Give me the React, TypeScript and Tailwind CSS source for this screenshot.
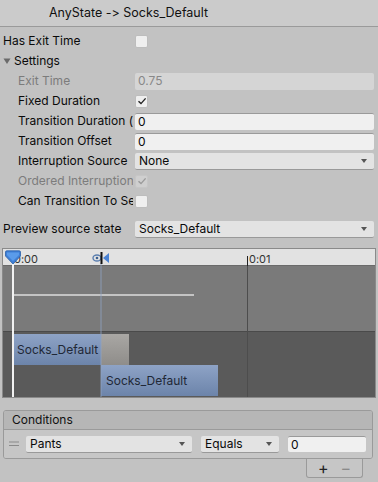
import React from "react";

const font = { fontFamily: "Inter, 'Noto Sans', sans-serif" };

function Arrow() {
  return (
    <svg width="8" height="6" viewBox="0 0 8 6" className="shrink-0">
      <path d="M1 1 L7 1 L4 5 Z" fill="#555" />
    </svg>
  );
}

function Check({ on, disabled }: { on?: boolean; disabled?: boolean }) {
  return (
    <div
      className={`w-[13px] h-[13px] rounded-[2px] flex items-center justify-center ${
        disabled ? "bg-[#cfcfcf] border border-[#c6c6c6]" : "bg-[#efefef] border border-[#bdbdbd]"
      }`}
    >
      {on && (
        <svg width="10" height="10" viewBox="0 0 10 10">
          <path
            d="M1.5 5.2 L4 7.6 L8.6 2.4"
            fill="none"
            stroke={disabled ? "#9a9a9a" : "#222"}
            strokeWidth="1.4"
          />
        </svg>
      )}
    </div>
  );
}

function Row({
  label,
  indent,
  disabled,
  children,
}: {
  label: string;
  indent?: boolean;
  disabled?: boolean;
  children?: React.ReactNode;
}) {
  return (
    <div className="flex items-center h-[20px]">
      <div
        className={`w-[133px] shrink-0 overflow-hidden whitespace-nowrap ${indent ? "pl-[18px]" : "pl-[3px]"} ${
          disabled ? "text-[#7c7c7c]" : "text-[#0a0a0a]"
        }`}
      >
        {label}
      </div>
      <div className="flex-1 flex items-center pl-[2px] pr-[4px]">{children}</div>
    </div>
  );
}

function TextField({ value, disabled }: { value: string; disabled?: boolean }) {
  return (
    <div
      className={`flex-1 h-[17px] rounded-[2px] px-[3px] flex items-center ${
        disabled
          ? "bg-[#d5d5d5] text-[#888]"
          : "bg-[#f0f0f0] border-t border-[#9a9a9a] text-[#0a0a0a]"
      }`}
    >
      {value}
    </div>
  );
}

function Dropdown({ value, className }: { value: string; className?: string }) {
  return (
    <div
      className={`h-[17px] rounded-[2px] bg-[#e3e3e3] border-b border-[#999] pl-[4px] pr-[6px] flex items-center justify-between text-[#0a0a0a] ${
        className ?? "flex-1"
      }`}
    >
      <span>{value}</span>
      <Arrow />
    </div>
  );
}

export default function App() {
  return (
    <div
      className="w-[378px] h-[482px] bg-[#c2c2c2] text-[12px] overflow-hidden [font-feature-settings:'calt'_0] [font-variant-ligatures:none]"
      style={font}
    >
      {/* Header */}
      <div className="h-[27px] bg-[#cbcbcb] border-b border-[#9a9a9a] flex items-center pl-[49px] text-[12.5px] text-[#111]">
        AnyState -&gt; Socks_Default
      </div>

      <div className="pt-[4px]">
        <Row label="Has Exit Time">
          <Check />
        </Row>
        <div className="flex items-center h-[20px] pl-[3px]">
          <svg width="8" height="8" viewBox="0 0 8 8" className="mr-[3px]">
            <path d="M0.5 1.5 L7.5 1.5 L4 7 Z" fill="#6a6a6a" />
          </svg>
          <span className="text-[#0a0a0a]">Settings</span>
        </div>
        <Row label="Exit Time" indent disabled>
          <TextField value="0.75" disabled />
        </Row>
        <Row label="Fixed Duration" indent>
          <Check on />
        </Row>
        <Row label="Transition Duration (s)" indent>
          <TextField value="0" />
        </Row>
        <Row label="Transition Offset" indent>
          <TextField value="0" />
        </Row>
        <Row label="Interruption Source" indent>
          <Dropdown value="None" />
        </Row>
        <Row label="Ordered Interruption" indent disabled>
          <Check on disabled />
        </Row>
        <Row label="Can Transition To Self" indent>
          <Check />
        </Row>

        <div className="mt-[8px]">
          <Row label="Preview source state">
            <Dropdown value="Socks_Default" />
          </Row>
        </div>
      </div>

      {/* Timeline */}
      <div className="mt-[9px] mx-[2px] h-[150px] border border-[#8a8a8a] flex flex-col relative overflow-hidden">
        <div className="h-[17px] bg-[#e2e2e2] border-b border-[#6a6a6a] relative text-[11px] text-[#333]">
          <span className="absolute left-[11px] top-[2px]">0:00</span>
          <div className="absolute left-[244px] top-[7px] w-[1px] h-[10px] bg-[#222]" />
          <span className="absolute left-[246px] top-[2px]">0:01</span>
        </div>
        <div className="h-[66px] bg-[#7a7a7a] border-b border-[#4a4a4a] relative">
          <div className="absolute left-[10px] top-[28px] w-[181px] h-[2px] bg-[#c4c4c4]" />
        </div>
        <div className="flex-1 bg-[#5a5a5a] flex flex-col">
          <div className="h-[31px] mt-[2px] flex">
            <div className="ml-[10px] w-[88px] bg-gradient-to-b from-[#8ea3c6] to-[#6c84aa] flex items-center pl-[4px] text-[#1f2836] whitespace-nowrap">
              Socks_Default
            </div>
            <div className="w-[28px] bg-gradient-to-b from-[#a9a7a4] to-[#8f8d8a]" />
          </div>
          <div className="h-[31px] flex">
            <div className="ml-[98px] w-[117px] bg-gradient-to-b from-[#8ea3c6] to-[#6c84aa] flex items-center pl-[5px] text-[#1f2836] whitespace-nowrap">
              Socks_Default
            </div>
          </div>
        </div>

        {/* vertical lines */}
        <div className="absolute left-[244px] top-[17px] bottom-0 w-[1px] bg-[#4d4d4d]" />
        <div className="absolute left-[97px] top-[14px] bottom-0 w-[2px] bg-[#8fa3c2] opacity-40" />
        <div className="absolute left-[9px] top-[10px] bottom-0 w-[2px] bg-[#f2f2f2]" />

        {/* playhead marker */}
        <svg className="absolute left-[1px] top-[1px]" width="18" height="15" viewBox="0 0 18 15">
          <path d="M1.5 2 Q1.5 0.8 3 0.8 L15 0.8 Q16.5 0.8 16.5 2 L16.5 6 L9 14 L1.5 6 Z" fill="#3f7fd6" stroke="#2a5fa8" strokeWidth="0.8" />
          <path d="M3 2.5 L15 2.5 L15 5 L9 11 L3 5 Z" fill="#5a9bea" />
        </svg>
        {/* transition marker */}
        <svg className="absolute left-[89px] top-[2px]" width="18" height="14" viewBox="0 0 18 14">
          <ellipse cx="5" cy="7" rx="4" ry="3" fill="none" stroke="#5b7fb0" strokeWidth="1.4" />
          <circle cx="5" cy="7" r="1.3" fill="#3b5f90" />
          <rect x="8.5" y="1" width="2" height="12" fill="#111" />
          <path d="M17 2 L17 12 L11 7 Z" fill="#4a82d4" />
        </svg>
      </div>

      {/* Conditions */}
      <div className="mt-[12px] mx-[3px] w-[370px]">
        <div className="border border-[#9a9a9a] rounded-[3px] overflow-hidden">
          <div className="h-[19px] bg-[#b6b6b6] border-b border-[#9a9a9a] flex items-center pl-[8px] text-[#111]">
            Conditions
          </div>
          <div className="h-[28px] bg-[#c6c6c6] flex items-center pl-[5px] pr-[6px] gap-[9px]">
            <svg width="10" height="6" viewBox="0 0 10 6" className="shrink-0 -mr-[2px]">
              <rect x="0" y="0.5" width="10" height="1" fill="#8a8a8a" />
              <rect x="0" y="4" width="10" height="1" fill="#8a8a8a" />
            </svg>
            <Dropdown value="Pants" className="w-[166px]" />
            <Dropdown value="Equals" className="w-[78px]" />
            <div className="flex-1 h-[16px] bg-[#f0f0f0] border-t border-[#9a9a9a] rounded-[2px] px-[3px] flex items-center text-[#0a0a0a]">
              0
            </div>
          </div>
        </div>
        <div className="flex justify-end pr-[10px]">
          <div className="w-[57px] h-[19px] bg-[#c6c6c6] border border-t-0 border-[#9a9a9a] rounded-b-[3px] flex items-center justify-center gap-[12px]">
            <span className="text-[16px] leading-none text-[#222]">+</span>
            <span className="text-[16px] leading-none text-[#8a8a8a]">−</span>
          </div>
        </div>
      </div>
    </div>
  );
}
